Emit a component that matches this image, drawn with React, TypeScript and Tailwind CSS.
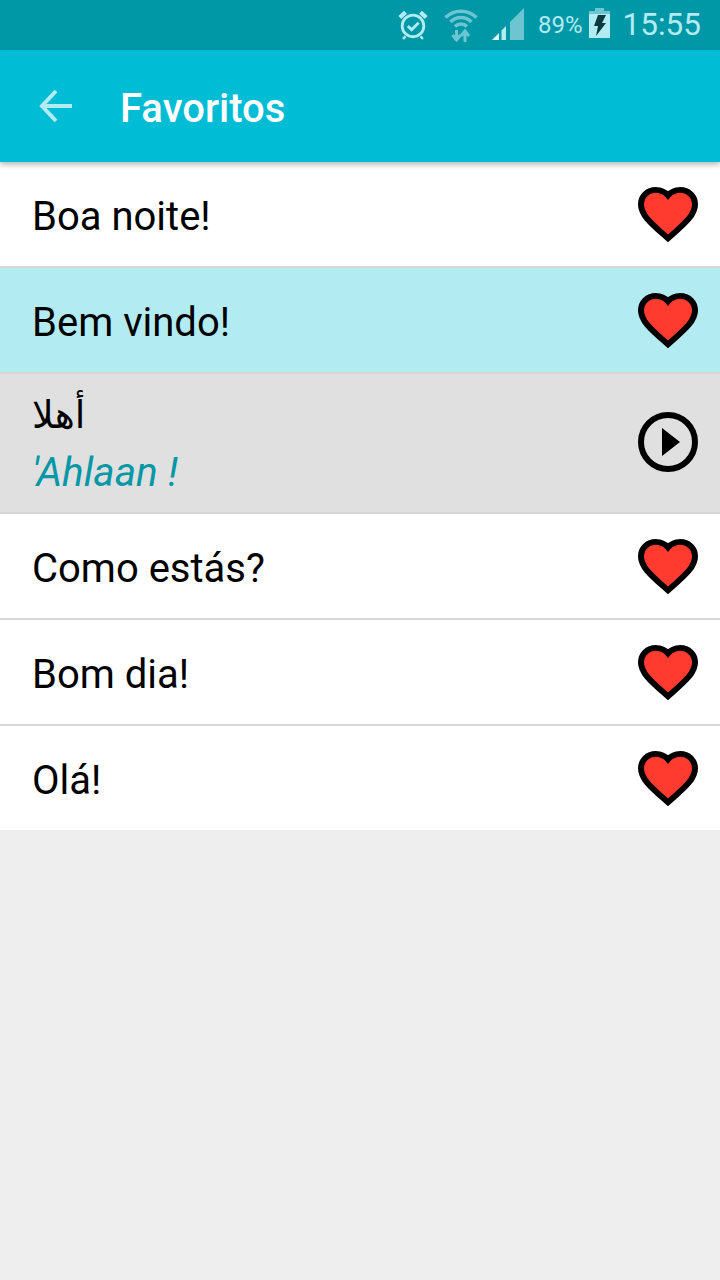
const Heart = () => (
  <svg width="60" height="55" viewBox="0.9 1.9 22.2 20.8" preserveAspectRatio="none" className="mt-[1px] block overflow-visible">
    <path d="M12 21.35l-1.45-1.32C5.4 15.36 2 12.28 2 8.5 2 5.42 4.42 3 7.5 3c1.74 0 3.41.81 4.5 2.09C13.09 3.81 14.76 3 16.5 3 19.58 3 22 5.42 22 8.5c0 3.78-3.4 6.86-8.55 11.54L12 21.35z" fill="#ff3b30" stroke="#000" strokeWidth="2.2" strokeLinejoin="miter" />
  </svg>
);

const Play = () => (
  <svg width="60" height="60" viewBox="0 0 60 60" className="mb-[2px] block">
    <circle cx="30" cy="30" r="27" fill="none" stroke="#000" strokeWidth="6" />
    <path d="M24 16 L42 30 L24 44 Z" fill="#000" />
  </svg>
);

const Row = ({ label, tint }: { label: string; tint?: boolean }) => (
  <div className={`flex h-[106px] items-center justify-between border-b-2 border-[#d6d6d6] pl-[32px] pr-[22px] ${tint ? "bg-[#b2ebf2]" : "bg-white"}`}>
    <span className="pt-[6px] text-[40px] leading-none text-black">{label}</span>
    <Heart />
  </div>
);

export default function App() {
  return (
    <div className="flex min-h-[1280px] w-[720px] flex-col bg-[#eeeeee] font-['Roboto',sans-serif]">
      <div className="flex h-[50px] items-center justify-end bg-[#0097a7] pr-[19px] text-[#b2ebf2]">
        <svg width="32" height="32" viewBox="0 0 34 34" className="mr-[15px]" fill="none" stroke="#b2ebf2">
          <circle cx="17" cy="18" r="11.500" strokeWidth="3" />
          <path d="M11.500 18 L15.500 22 L23 14.500" strokeWidth="3" />
          <path d="M3 9 L9 3.500 M31 9 L25 3.500" strokeWidth="4.500" />
          <path d="M9 29 L6.500 32 M25 29 L27.500 32" strokeWidth="2.500" />
        </svg>
        <svg width="34" height="34" viewBox="0 0 34 34" className="mr-[13px]" fill="none" stroke="#6cc5d0">
          <path d="M1.500 9.500 C10 1 24 1 32.500 9.500" strokeWidth="3.500" />
          <path d="M6.500 14 C12.500 8 21.500 8 27.500 14" strokeWidth="3.500" />
          <path d="M11 18.500 C14.500 15 19.500 15 23 18.500" strokeWidth="3.500" />
          <path d="M12.500 22 V32 M8.500 27 L12.500 32 L16.500 27 M21 34 V24 M17 28 L21 23 L25 28" strokeWidth="3" />
        </svg>
        <svg width="34" height="34" viewBox="0 0 34 34" className="mr-[13px]">
          <path d="M1 32 L8 25 V32 Z" fill="#e0f7fa" />
          <path d="M10.500 22.500 L15 18 V32 H10.500 Z" fill="#b2ebf2" />
          <path d="M19 14 L33 0 V32 H19 Z" fill="#6cc5d0" />
        </svg>
        <span className="mr-[6px] text-[24px] leading-none">89%</span>
        <svg width="21" height="30" viewBox="0 0 21 30" className="mb-[4px] mr-[13px]">
          <path d="M0 3 H6 V0 H15 V3 H21 V30 H0 Z" fill="#b2ebf2" />
          <path d="M6 0 H15 V3 H21 V6 H0 V3 H6 Z" fill="#6cc5d0" />
          <path d="M9 7 H17 L13 15 H17 L7 28 L9 18 H5 Z" fill="#0b3a40" />
        </svg>
        <span className="text-[31.500px] leading-none">15:55</span>
      </div>

      <div className="relative z-10 flex h-[112px] items-center bg-[#00bcd4] pl-[39px] shadow-[0_3px_5px_rgba(0,0,0,0.25)]">
        <svg width="34" height="34" viewBox="0 0 34 34" fill="none" stroke="#b2ebf2" strokeWidth="4">
          <path d="M33 17 H4 M17 2 L3 17 L17 32" />
        </svg>
        <span className="ml-[47px] pt-[6px] text-[40px] font-medium leading-none text-white">Favoritos</span>
      </div>

      <Row label="Boa noite!" />
      <Row label="Bem vindo!" tint />

      <div className="flex h-[140px] items-center justify-between border-b-2 border-[#d6d6d6] bg-[#e0e0e0] pl-[32px] pr-[22px]">
        <div className="flex flex-col">
          <span dir="rtl" className="text-left font-['DejaVu_Sans',sans-serif] text-[38px] leading-[44px] text-black">أهلا</span>
          <span className="mt-[13px] text-[40.500px] italic leading-[44px] text-[#0097a7]">'Ahlaan !</span>
        </div>
        <Play />
      </div>

      <Row label="Como estás?" />
      <Row label="Bom dia!" />
      <div className="flex h-[104px] items-center justify-between bg-white pl-[32px] pr-[22px]">
        <span className="pt-[6px] text-[40px] leading-none text-black">Olá!</span>
        <Heart />
      </div>
    </div>
  );
}
